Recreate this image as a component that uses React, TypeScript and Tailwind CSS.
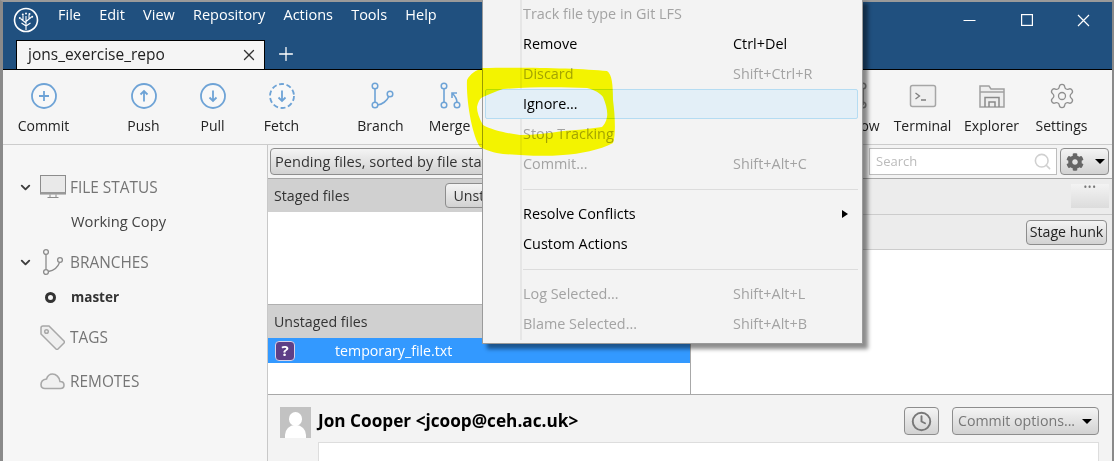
import type { ReactNode } from "react";
import { ChevronDown, Clock, Search, Settings, X, Plus } from "lucide-react";
import { FaCog } from "react-icons/fa";

const BLUE = "#6ea3d6";

function ToolButton({ label, className = "", children }: { label: string; className?: string; children: ReactNode }) {
  return (
    <div className={`flex w-[69px] shrink-0 flex-col items-center ${className}`}>
      <svg width="30" height="30" viewBox="0 0 30 30" fill="none" className="mt-[11px]">
        {children}
      </svg>
      <span className="mt-[5px] text-[14px] leading-[20px] whitespace-nowrap text-[#222]">{label}</span>
    </div>
  );
}

function Ring({ dashed = false }: { dashed?: boolean }) {
  return <circle cx="15" cy="15" r="12" stroke={BLUE} strokeWidth="1.8" strokeDasharray={dashed ? "5 2.6" : undefined} fill="#f8f8f8" />;
}

function Node({ x, y, r = 2.8 }: { x: number; y: number; r?: number }) {
  return <circle cx={x} cy={y} r={r} stroke={BLUE} strokeWidth="1.5" fill="#f5f5f5" />;
}

function Logo() {
  return (
    <svg width="26" height="26" viewBox="0 0 26 26" fill="none" stroke="white" className="ml-[10px] shrink-0">
      <circle cx="13" cy="13" r="11.5" strokeWidth="1.6" />
      <path d="M13 23V9M13 16L7.5 11.5M13 14.5L18.5 10M13 19L8.5 16M13 19L17.5 16M10 13.5V8.5M16 12V7.5" strokeWidth="1.1" />
      <circle cx="13" cy="6.5" r="1" fill="white" stroke="none" />
      <circle cx="9.8" cy="7.5" r="1" fill="white" stroke="none" />
      <circle cx="16.5" cy="7" r="1" fill="white" stroke="none" />
      <circle cx="6.8" cy="11" r="1" fill="white" stroke="none" />
      <circle cx="19.2" cy="9.8" r="1" fill="white" stroke="none" />
    </svg>
  );
}

function SectionHeader({ label, icon, expandable = false, className = "" }: { label: string; icon: ReactNode; expandable?: boolean; className?: string }) {
  return (
    <div className={`flex h-[36px] items-center ${className}`}>
      <span className="flex w-[37px] shrink-0 items-center pl-[15px]">
        {expandable && <ChevronDown size={15} strokeWidth={3} className="text-[#3d3d3d]" />}
      </span>
      <span className="flex w-[30px] shrink-0 items-center">{icon}</span>
      <span className="pt-[2px] text-[15.4px] text-[#757575]">{label}</span>
    </div>
  );
}

function Sidebar() {
  return (
    <aside className="w-[265px] shrink-0 border-r border-[#c8c8c8] bg-[#f6f6f6] pt-[24px]">
      <SectionHeader
        expandable
        label="FILE STATUS"
        icon={
          <svg width="26" height="24" viewBox="0 0 26 24" fill="none">
            <rect x="0.5" y="0.5" width="25" height="18.5" fill="#e9e9e9" stroke="#8c8c8c" />
            <rect x="0.5" y="17" width="25" height="2" fill="#9a9a9a" />
            <path d="M10 19.5V22M16 19.5V22M7.5 22.5H18.5" stroke="#8c8c8c" />
          </svg>
        }
      />
      <div className="h-[34px] pl-[68px] text-[14.7px] leading-[32px] text-[#444]">Working Copy</div>
      <SectionHeader
        expandable
        className="mt-[5px]"
        label="BRANCHES"
        icon={
          <svg width="24" height="28" viewBox="0 0 24 28" fill="none" stroke="#8c8c8c" strokeWidth="1.3">
            <circle cx="6" cy="4" r="2.4" />
            <circle cx="6" cy="24" r="2.4" />
            <circle cx="20" cy="12" r="2.4" />
            <path d="M6 6.5V21.5M8.4 23.5C14 22.5 18 19 19.5 14.5" />
          </svg>
        }
      />
      <div className="flex h-[34px] items-center pl-[42px] text-[13.5px] font-bold text-[#333]">
        <span className="h-[11px] w-[11px] rounded-full border-[3px] border-[#333]" />
        <span className="ml-[15px]">master</span>
      </div>
      <SectionHeader
        className="mt-[5px]"
        label="TAGS"
        icon={
          <svg width="25" height="25" viewBox="0 0 25 25" fill="#efefef" stroke="#a8a8a8" strokeWidth="1.5">
            <path d="M1 3Q1 1 3 1L9 1L24 16Q25 17 24 18L18 24Q17 25 16 24L1 9Z" />
            <circle cx="6.5" cy="6.5" r="1.8" />
          </svg>
        }
      />
      <SectionHeader
        className="mt-[8px]"
        label="REMOTES"
        icon={
          <svg width="25" height="18" viewBox="0 0 25 18" fill="#f0f0f0" stroke="#a8a8a8" strokeWidth="1.6">
            <path d="M5 16.5H20.5C23 16.5 24 15 24 13C24 10.5 22 9.5 20 9.5C19.5 5 16 2 12.5 2C9.5 2 7.5 4 6.5 7C3.5 7.5 1 9.5 1 12.5C1 15 2.5 16.5 5 16.5Z" />
          </svg>
        }
      />
    </aside>
  );
}

function GlossButton({ className = "", children }: { className?: string; children: ReactNode }) {
  return (
    <div className={`flex items-center rounded-[4px] border border-[#8d8d8d] bg-linear-to-b from-[#f4f4f4] to-[#d2d2d2] text-[14.2px] whitespace-nowrap ${className}`}>
      {children}
    </div>
  );
}

function MenuRow({ label, shortcut, disabled = false, hover = false, arrow = false }: { label: string; shortcut?: string; disabled?: boolean; hover?: boolean; arrow?: boolean }) {
  return (
    <div className={`flex h-[30px] items-center rounded-[2px] border pl-[37px] text-[14.4px] ${hover ? "border-[#b5dcf2] bg-[#e3eff7]" : "border-transparent"} ${disabled ? "text-[#a3a3a3]" : "text-black"}`}>
      <span className="w-[210px] whitespace-nowrap">{label}</span>
      {shortcut && <span className="whitespace-nowrap">{shortcut}</span>}
      {arrow && <span className="mr-[9px] ml-auto h-0 w-0 border-y-[4.5px] border-l-[6px] border-y-transparent border-l-black" />}
    </div>
  );
}

function ContextMenu() {
  return (
    <div className="absolute top-[-2px] left-[482px] h-[346px] w-[381px] border border-[#9a9a9a] bg-[#f3f3f3] pr-[4px] pl-[2px] shadow-[5px_5px_4px_rgba(0,0,0,0.45)]">
      <div className="absolute top-0 bottom-[3px] left-[37px] w-[2px] bg-[#e6e6e6]" />
      <div className="relative">
        <MenuRow disabled label="Track file type in Git LFS" />
        <MenuRow label="Remove" shortcut="Ctrl+Del" />
        <MenuRow disabled label="Discard" shortcut="Shift+Ctrl+R" />
        <MenuRow hover label="Ignore..." />
        <MenuRow disabled label="Stop Tracking" />
        <MenuRow disabled label="Commit..." shortcut="Shift+Alt+C" />
        <div className="mt-[10px] mb-[9px] ml-[38px] h-px bg-[#dcdcdc]" />
        <MenuRow arrow label="Resolve Conflicts" />
        <MenuRow label="Custom Actions" />
        <div className="mt-[10px] mb-[9px] ml-[38px] h-px bg-[#dcdcdc]" />
        <MenuRow disabled label="Log Selected..." shortcut="Shift+Alt+L" />
        <MenuRow disabled label="Blame Selected..." shortcut="Shift+Alt+B" />
      </div>
    </div>
  );
}

function Scribble() {
  return (
    <svg width="1114" height="461" viewBox="0 0 1114 461" className="pointer-events-none absolute inset-0 mix-blend-multiply">
      <path
        fillRule="evenodd"
        fill="#ffff00"
        d="M483 68C520 67 580 68 607 71C612 74 613 85 613 100C615 115 616 135 613 143C600 150 580 154 563 155C540 157 520 155 503 154C495 153 485 150 480 147C472 135 466 100 467 80C470 74 476 70 483 68ZM503 89C530 87 560 87 587 88C595 90 600 93 603 97C606 104 608 112 607 117C606 122 604 125 602 127C590 129 575 130 563 131C550 133 535 135 520 135C505 133 492 130 483 125C479 118 477 112 477 107C478 102 480 98 483 97C490 94 496 91 503 89Z"
      />
    </svg>
  );
}

export default function App() {
  return (
    <div className="relative h-[461px] w-[1114px] overflow-hidden bg-white font-['Open_Sans',sans-serif] text-black">
      <div className="flex h-full flex-col border-t-[2px] border-r-[2px] border-l-[3px] border-t-[#9a9a9a] border-r-[#8a8a8a] border-l-[#8a8a8a]">
        <header className="h-[68px] shrink-0 border-b border-black bg-[#20507f]">
          <div className="flex h-[38px] items-start">
            <div className="mt-[5px]">
              <Logo />
            </div>
            <nav className="mt-[3px] ml-[19px] flex gap-[18.2px] text-[14.5px] leading-[20px] text-white">
              <span>File</span>
              <span>Edit</span>
              <span>View</span>
              <span>Repository</span>
              <span>Actions</span>
              <span>Tools</span>
              <span>Help</span>
            </nav>
            <div className="ml-auto flex text-white">
              <span className="flex h-[36px] w-[57px] items-center justify-center">
                <svg width="13" height="13" viewBox="0 0 13 13" stroke="white" strokeWidth="1"><path d="M0.5 6.5H12.5" /></svg>
              </span>
              <span className="flex h-[36px] w-[57px] items-center justify-center">
                <svg width="12" height="12" viewBox="0 0 12 12" fill="none" stroke="white" strokeWidth="1.2"><rect x="0.6" y="0.6" width="10.8" height="10.8" /></svg>
              </span>
              <span className="flex h-[36px] w-[57px] items-center justify-center">
                <svg width="13" height="13" viewBox="0 0 13 13" stroke="white" strokeWidth="1.2"><path d="M1 1L12 12M12 1L1 12" /></svg>
              </span>
            </div>
          </div>
          <div className="flex h-[29px] items-end pl-[13px]">
            <div className="flex h-[29px] w-[249px] items-center border-t border-r border-l border-black bg-[#f5f5f5] pr-[6px] pl-[11px] text-[15.5px] text-[#222]">
              <span>jons_exercise_repo</span>
              <X size={18} strokeWidth={1.8} className="ml-auto text-[#333]" />
            </div>
            <Plus size={22} strokeWidth={1.4} className="mb-[4px] ml-[10px] text-white" />
          </div>
        </header>

        <div className="flex h-[75px] shrink-0 border-b border-[#cccccc] bg-[#f5f5f5] pl-[6px]">
          <ToolButton label="Commit">
            <Ring />
            <path d="M15 10V20M10 15H20" stroke={BLUE} strokeWidth="1.8" />
          </ToolButton>
          <ToolButton label="Push" className="ml-[31px]">
            <Ring />
            <path d="M15 20.5V10.5M11.5 13.5L15 10L18.5 13.5" stroke={BLUE} strokeWidth="1.8" />
          </ToolButton>
          <ToolButton label="Pull">
            <Ring />
            <path d="M15 9.5V19.5M11.5 16.5L15 20L18.5 16.5" stroke={BLUE} strokeWidth="1.8" />
          </ToolButton>
          <ToolButton label="Fetch">
            <Ring dashed />
            <path d="M15 9.5V19.5M11.5 16.5L15 20L18.5 16.5" stroke={BLUE} strokeWidth="1.8" />
          </ToolButton>
          <ToolButton label="Branch" className="ml-[30px]">
            <path d="M9 7V22M11.5 24C16 23.5 21 20 22.8 15.5" stroke={BLUE} strokeWidth="1.6" />
            <Node x={9} y={5} />
            <Node x={9} y={24} />
            <Node x={24} y={13} />
          </ToolButton>
          <ToolButton label="Merge">
            <path d="M9 7V22M22 21.5C22 17 20 15 17.5 12.5M17 17V12H22" stroke={BLUE} strokeWidth="1.6" />
            <Node x={9} y={5} />
            <Node x={9} y={24} />
            <Node x={22} y={24} />
          </ToolButton>
          <div className="flex-1" />
          <ToolButton label="Git Flow">
            <path d="M24 7V24" stroke="#8c8c8c" strokeWidth="1.6" />
            <circle cx="24" cy="5" r="2.8" stroke="#8c8c8c" strokeWidth="1.5" />
            <circle cx="24" cy="24" r="2.8" stroke="#8c8c8c" strokeWidth="1.5" />
          </ToolButton>
          <ToolButton label="Terminal">
            <rect x="2.5" y="4.5" width="25" height="21" rx="2" fill="#efefef" stroke="#a6a6a6" strokeWidth="1.5" />
            <path d="M7.5 12L11.5 15L7.5 18M13 19H18" stroke="#7d7d7d" strokeWidth="1.3" />
          </ToolButton>
          <ToolButton label="Explorer">
            <path d="M3 26V5H12L14 8H27V26Z" fill="#eeeeee" stroke="#a0a0a0" strokeWidth="1.5" />
            <path d="M3 11H27" stroke="#a0a0a0" strokeWidth="1.5" />
            <path d="M8 26V16.5H22V26M12 26V21H18V26" stroke="#8a8a8a" strokeWidth="1.5" />
          </ToolButton>
          <div className="mr-[16px] ml-[1px] flex w-[69px] shrink-0 flex-col items-center">
            <Settings size={28} strokeWidth={1.1} className="mt-[12px] text-[#8f8f8f]" />
            <span className="mt-[6px] text-[14px] leading-[20px] text-[#222]">Settings</span>
          </div>
        </div>

        <div className="flex min-h-0 flex-1">
          <Sidebar />
          <div className="flex min-w-0 flex-1 flex-col bg-[#f3f3f3]">
            <div className="flex h-[34px] shrink-0 items-center border-b border-[#a8a8a8] pr-[3px] pl-[2px]">
              <GlossButton className="h-[27px] w-[300px] pl-[4px] text-[14.6px] text-[#333]">Pending files, sorted by file status</GlossButton>
              <div className="ml-auto flex h-[27px] w-[188px] items-center border border-[#bdbdbd] bg-white pr-[4px] pl-[6px] text-[13px] text-[#bbbbbb]">
                <span>Search</span>
                <Search size={19} strokeWidth={2} className="ml-auto text-[#d0d0d0]" />
              </div>
              <GlossButton className="ml-[3px] h-[27px] w-[49px] pl-[5px] text-[#666]">
                <FaCog size={18} />
                <span className="ml-[11px] h-0 w-0 border-x-[5px] border-t-[5px] border-x-transparent border-t-black" />
              </GlossButton>
            </div>
            <div className="flex min-h-0 flex-1">
              <div className="flex w-[423px] shrink-0 flex-col border-r border-[#a8a8a8]">
                <div className="flex h-[33px] shrink-0 items-center bg-[#d0d0d0] pl-[6px] text-[14.2px] text-[#333]">
                  <span>Staged files</span>
                  <GlossButton className="ml-[96px] h-[25px] w-[90px] pl-[7px]">Unstage all</GlossButton>
                </div>
                <div className="h-[93px] shrink-0 border-b border-[#b0b0b0] bg-white" />
                <div className="flex h-[33px] shrink-0 items-center bg-[#d0d0d0] pl-[6px] text-[14.2px] text-[#333]">Unstaged files</div>
                <div className="flex h-[25px] shrink-0 items-center bg-[#3399ff] pl-[7px] text-[14.2px] text-white">
                  <span className="flex h-[20px] w-[20px] items-center justify-center rounded-[4px] border border-[#d8d2e8] bg-[#5d3f87] text-[15px] font-bold">?</span>
                  <span className="ml-[40px]">temporary_file.txt</span>
                </div>
                <div className="flex-1 bg-white" />
              </div>
              <div className="flex min-w-0 flex-1 flex-col">
                <div className="flex h-[36px] shrink-0 items-start justify-end border-b border-[#cccccc] bg-[#ececec] pt-[5px] pr-[3px]">
                  <div className="flex h-[24px] w-[38px] justify-center bg-linear-to-b from-[#f3f3f3] to-[#dcdcdc] text-[10px] leading-[6px] tracking-[0.5px] text-[#777]">•••</div>
                </div>
                <div className="flex h-[35px] shrink-0 items-center justify-end border-b border-[#cccccc] bg-[#ececec] pr-[5px]">
                  <GlossButton className="h-[25px] w-[81px] justify-center text-[#222]">Stage hunk</GlossButton>
                </div>
                <div className="flex-1 bg-white" />
              </div>
            </div>
            <div className="h-[67px] shrink-0 border-t border-[#a8a8a8] bg-[#f3f3f3] pt-[12px] pl-[12px]">
              <div className="flex">
                <div className="relative h-[31px] w-[31px] shrink-0 overflow-hidden bg-[#c2c2c2]">
                  <div className="absolute top-[5px] left-[9px] h-[14px] w-[13px] rounded-full bg-white" />
                  <div className="absolute top-[18px] left-[5px] h-[20px] w-[21px] rounded-t-[10px] bg-white" />
                </div>
                <div className="ml-[7px] flex min-w-0 flex-1 flex-col">
                  <div className="flex h-[28px] items-center">
                    <span className="text-[17.2px] font-bold whitespace-nowrap">Jon Cooper &lt;jcoop@ceh.ac.uk&gt;</span>
                    <GlossButton className="ml-auto h-[28px] w-[35px] justify-center text-[#777]">
                      <Clock size={21} strokeWidth={2.2} />
                    </GlossButton>
                    <GlossButton className="mr-[13px] ml-[13px] h-[28px] w-[147px] pl-[5px] text-[#777]">
                      Commit options...
                      <span className="mr-[6px] ml-auto h-0 w-0 border-x-[5px] border-t-[5px] border-x-transparent border-t-black" />
                    </GlossButton>
                  </div>
                  <div className="mt-[7px] mr-[13px] h-[40px] border border-[#dddddd] bg-white" />
                </div>
              </div>
            </div>
          </div>
        </div>
      </div>
      <ContextMenu />
      <Scribble />
    </div>
  );
}
